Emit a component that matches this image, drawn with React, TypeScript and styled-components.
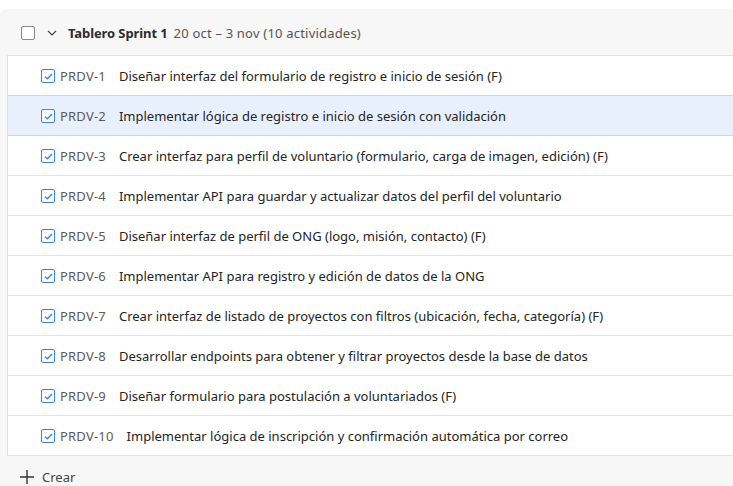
import React from "react";
import styled, { createGlobalStyle } from "styled-components";

const Global = createGlobalStyle`
  html, body { margin: 0; padding: 0; background: #ffffff; }
  body { font-family: "Noto Sans", "Open Sans", sans-serif; }
  * { box-sizing: border-box; }
`;

const Page = styled.div`
  width: 733px;
  height: 486px;
  padding-top: 9px;
  overflow: hidden;
  background: #ffffff;
`;

const Panel = styled.section`
  width: 760px;
  min-height: 480px;
  background: #f7f7f7;
  border-top-left-radius: 6px;
  display: flex;
  flex-direction: column;
  & > * { flex-shrink: 0; }
`;

const Header = styled.div`
  height: 46px;
  display: flex;
  align-items: center;
  padding-left: 21px;
  padding-top: 1px;
  font-size: 13px;
`;

const BoxEmpty = styled.span`
  width: 14px;
  height: 14px;
  border: 1px solid #8a8a8a;
  border-radius: 2px;
  background: #fff;
  display: inline-block;
`;

const Chevron = styled.span`
  display: inline-flex;
  margin-left: 12px;
  margin-right: 11px;
  color: #444;
`;

const Title = styled.span`
  font-weight: 700;
  color: #2b2b2b;
  margin-right: 6px;
  letter-spacing: -0.1px;
`;

const Meta = styled.span`
  color: #555;
  letter-spacing: 0.2px;
`;

const List = styled.div`
  margin-left: 7px;
  background: #ffffff;
  border-top: 1px solid #e0e0e0;
  border-left: 1px solid #e0e0e0;
`;

const Row = styled.div<{ $active?: boolean }>`
  height: 40px;
  display: flex;
  align-items: center;
  padding-left: 33px;
  padding-top: 1px;
  font-size: 13px;
  background: ${(p) => (p.$active ? "#e9f0fd" : "#ffffff")};
  border-bottom: 1px solid ${(p) => (p.$active ? "#cdd6e4" : "#e3e3e3")};
  ${(p) => (p.$active ? "box-shadow: 0 -1px 0 #cdd6e4;" : "")}
`;

const Check = styled.span`
  width: 14px;
  height: 14px;
  border: 1.5px solid #3d85e8;
  border-radius: 2px;
  display: inline-flex;
  align-items: center;
  justify-content: center;
  background: #fff;
  margin-right: 5px;
`;

const Key = styled.span`
  color: #5a5a5a;
  margin-right: 13px;
  letter-spacing: 0.2px;
`;

const Summary = styled.span`
  color: #242424;
  white-space: nowrap;
`;

const CreateRow = styled.div`
  height: 21px;
  display: flex;
  align-items: center;
  padding-left: 20px;
  margin-top: 10px;
  font-size: 13px;
  color: #444;
  gap: 8px;
`;

const items = [
  ["PRDV-1", "Diseñar interfaz del formulario de registro e inicio de sesión (F)"],
  ["PRDV-2", "Implementar lógica de registro e inicio de sesión con validación"],
  ["PRDV-3", "Crear interfaz para perfil de voluntario (formulario, carga de imagen, edición) (F)"],
  ["PRDV-4", "Implementar API para guardar y actualizar datos del perfil del voluntario"],
  ["PRDV-5", "Diseñar interfaz de perfil de ONG (logo, misión, contacto) (F)"],
  ["PRDV-6", "Implementar API para registro y edición de datos de la ONG"],
  ["PRDV-7", "Crear interfaz de listado de proyectos con filtros (ubicación, fecha, categoría) (F)"],
  ["PRDV-8", "Desarrollar endpoints para obtener y filtrar proyectos desde la base de datos"],
  ["PRDV-9", "Diseñar formulario para postulación a voluntariados (F)"],
  ["PRDV-10", "Implementar lógica de inscripción y confirmación automática por correo"],
];

export default function App() {
  return (
    <Page>
      <Global />
      <Panel>
        <Header>
          <BoxEmpty />
          <Chevron>
            <svg width="10" height="6" viewBox="0 0 10 6" fill="none">
              <path d="M1 1l4 4 4-4" stroke="#444" strokeWidth="1.2" />
            </svg>
          </Chevron>
          <Title>Tablero Sprint 1</Title>
          <Meta>20 oct – 3 nov (10 actividades)</Meta>
        </Header>
        <List>
          {items.map(([k, s], i) => (
            <Row key={k} $active={i === 1}>
              <Check>
                <svg width="9" height="7" viewBox="0 0 9 7" fill="none">
                  <path d="M1 3.5l2.4 2.3L8 1" stroke="#3d85e8" strokeWidth="1.4" />
                </svg>
              </Check>
              <Key>{k}</Key>
              <Summary>{s}</Summary>
            </Row>
          ))}
        </List>
        <CreateRow>
          <svg width="14" height="14" viewBox="0 0 14 14" fill="none">
            <path d="M7 0v14M0 7h14" stroke="#333" strokeWidth="1.4" />
          </svg>
          Crear
        </CreateRow>
      </Panel>
    </Page>
  );
}
